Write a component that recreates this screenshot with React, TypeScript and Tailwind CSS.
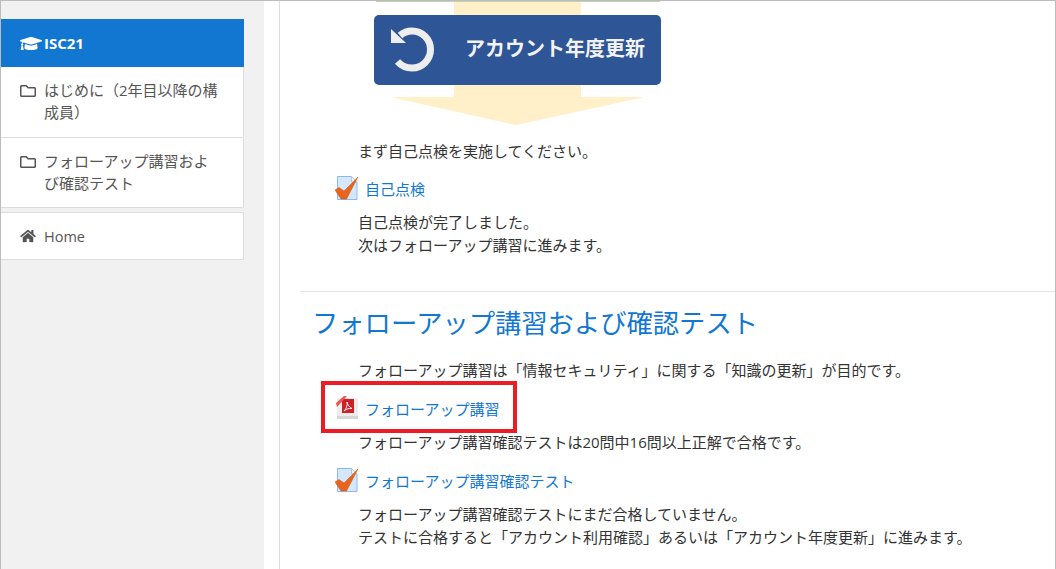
import { FaGraduationCap, FaHome, FaRegFolder } from 'react-icons/fa';

const font = 'font-["Open_Sans","Noto_Sans_CJK_JP",sans-serif]';

function CheckDocIcon() {
  return (
    <svg width={24} height={26} viewBox="0 0 24 26" aria-hidden>
      <path d="M2.500 0.500h14l5.500 5.500v17.500H2.500z" fill="#d5e8fb" stroke="#8db8ee" />
      <path d="M16.500 0.500v5.500h5.500z" fill="#eef5fd" stroke="#a9c9f2" />
      <path d="M0 14l4-2.500 5 3.500L23 1 11.500 23H6z" fill="#e8651d" stroke="#c9530f" strokeWidth={0.5} />
    </svg>
  );
}

function PdfIcon() {
  return (
    <svg width={24} height={26} viewBox="0 0 24 26" aria-hidden>
      <path d="M2 2h21v21H2z" fill="#ececec" />
      <path d="M2 20h21v3H2z" fill="#d6d6d6" />
      <path d="M7 3h12v14H7z" fill="#cf2027" />
      <path d="M1 7 9 0h3L2 11z" fill="#ef5350" />
      <path d="M9 15c2.500-2 3.500-6 3-9 .8 3 2 5 5 6.500-3-.3-5.500.4-8 2.500z" fill="none" stroke="#ffffff" strokeWidth={0.9} />
    </svg>
  );
}

function RenewBanner() {
  return (
    <div className="relative h-[124px] w-[320px] ml-[74px]">
      <svg width={320} height={124} viewBox="0 0 320 124" className="absolute left-0 top-0" aria-hidden>
        <path d="M80 0h127v96h64l-129 28L16 96h64z" fill="#fff0c9" />
        <path d="M2 0h284v1H2z" fill="#c3d2b5" />
      </svg>
      <div className="absolute left-0 top-[14px] flex h-[70px] w-[287px] items-center rounded-[5px] bg-[#2e5596]">
        <svg width={44} height={46} viewBox="0 0 44 46" className="ml-[17px]" aria-hidden>
          <path d="M9 8.500C12.500 5.500 16 4 21 4c10 0 18.500 8 18.500 18.500S31 41 21 41c-6 0-11-2.500-14.500-6.500" fill="none" stroke="#eeeeee" strokeWidth={7} />
          <path d="M0 2V16H15z" fill="#eeeeee" />
        </svg>
        <span className="ml-[30px] mb-[3px] text-[20px] font-bold text-[#f2f2f2]">アカウント年度更新</span>
      </div>
    </div>
  );
}

export default function App() {
  return (
    <div className={`${font} flex h-[569px] w-[1056px] overflow-hidden border-x border-t border-[#bcbcbc] bg-white text-[15px] leading-[23px] text-[#333]`}>
      <aside className="w-[263px] shrink-0 bg-[#f1f1f1] pt-[18px]">
        <div className="w-[243px]">
          <div className="flex h-[48px] items-center bg-[#1177d1] pl-[19px] text-[15px] font-bold text-white">
            <FaGraduationCap className="w-[22px] text-[21px]" />
            <span className="ml-[2px]">ISC21</span>
          </div>
          <nav className="border-r border-[#ddd] bg-white text-[15px] text-[#555]">
            <div className="flex h-[71px] border-b border-[#ddd] pl-[19px] pt-[12px] leading-[22px]">
              <FaRegFolder className="mt-[4px] w-[16px] shrink-0 text-[16px]" />
              <span className="ml-[8px] w-[176px]">はじめに（2年目以降の構成員）</span>
            </div>
            <div className="flex h-[70px] border-b border-[#ddd] pl-[19px] pt-[12px] leading-[22px]">
              <FaRegFolder className="mt-[4px] w-[16px] shrink-0 text-[16px]" />
              <span className="ml-[8px] w-[176px]">フォローアップ講習および確認テスト</span>
            </div>
          </nav>
          <div className="mt-[4px] flex h-[48px] items-center border-y border-r border-[#ddd] bg-white pl-[19px] text-[14.5px] text-[#555]">
            <FaHome className="w-[16px] text-[14px]" />
            <span className="ml-[8px]">Home</span>
          </div>
        </div>
      </aside>
      <div className="w-[16px] shrink-0 border-r border-[#ddd]" />
      <main className="relative min-w-0 flex-1 pl-[20px]">
        <RenewBanner />
        <p className="ml-[58px] mt-[15px]">まず自己点検を実施してください。</p>
        <a className="ml-[35px] mt-[11px] flex h-[30px] items-center text-[#1177d1]">
          <CheckDocIcon />
          <span className="ml-[6px]">自己点検</span>
        </a>
        <p className="ml-[58px] mt-[7px]">
          自己点検が完了しました。
          <br />
          次はフォローアップ講習に進みます。
        </p>
        <hr className="mt-[34px] border-[#e5e5e5]" />
        <h2 className="ml-[12px] mt-[11px] text-[26.3px] leading-[40px] font-normal text-[#1177d1]">フォローアップ講習および確認テスト</h2>
        <p className="ml-[58px] mt-[16px]">フォローアップ講習は「情報セキュリティ」に関する「知識の更新」が目的です。</p>
        <a className="relative ml-[35px] mt-[12px] flex h-[30px] items-center text-[#1177d1]">
          <PdfIcon />
          <span className="ml-[6px]">フォローアップ講習</span>
          <span className="absolute left-[-14px] top-[-13px] h-[52px] w-[196px] border-[4px] border-[#ed1c24]" />
        </a>
        <p className="ml-[58px] mt-[7px]">フォローアップ講習確認テストは20問中16問以上正解で合格です。</p>
        <a className="ml-[35px] mt-[12px] flex h-[30px] items-center text-[#1177d1]">
          <CheckDocIcon />
          <span className="ml-[6px]">フォローアップ講習確認テスト</span>
        </a>
        <p className="ml-[58px] mt-[7px]">
          フォローアップ講習確認テストにまだ合格していません。
          <br />
          テストに合格すると「アカウント利用確認」あるいは「アカウント年度更新」に進みます。
        </p>
      </main>
    </div>
  );
}
